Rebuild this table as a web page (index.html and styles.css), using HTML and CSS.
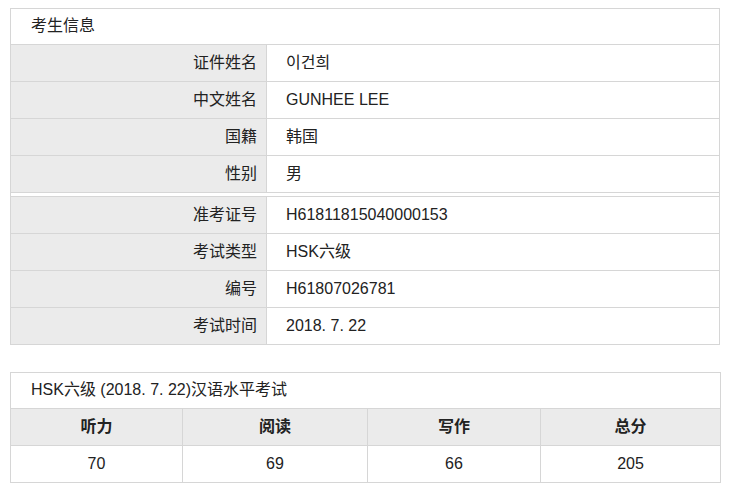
FILE: index.html
```html
<!DOCTYPE html>
<html lang="zh-CN">

<head>
    <meta charset="UTF-8">
    <meta name="viewport" content="width=device-width, initial-scale=1.0">
    <title>考生信息</title>
    <link rel="stylesheet" href="styles.css">
</head>

<body>
    <!-- 考生信息 -->
    <table class="box info">
        <colgroup>
            <col class="col-label">
            <col>
        </colgroup>
        <tr class="title">
            <td colspan="2">考生信息</td>
        </tr>
        <tr><td class="label">证件姓名</td><td class="value">이건희</td></tr>
        <tr><td class="label">中文姓名</td><td class="value">GUNHEE LEE</td></tr>
        <tr><td class="label">国籍</td><td class="value">韩国</td></tr>
        <tr><td class="label">性别</td><td class="value">男</td></tr>
        <tr class="sep"><td colspan="2"></td></tr>
        <tr><td class="label">准考证号</td><td class="value">H61811815040000153</td></tr>
        <tr><td class="label">考试类型</td><td class="value">HSK六级</td></tr>
        <tr><td class="label">编号</td><td class="value">H61807026781</td></tr>
        <tr><td class="label">考试时间</td><td class="value">2018. 7. 22</td></tr>
    </table>

    <!-- 成绩 -->
    <table class="box score">
        <colgroup>
            <col class="c1">
            <col class="c2">
            <col class="c3">
            <col class="c4">
        </colgroup>
        <tr class="title">
            <td colspan="4">HSK六级 (2018. 7. 22)汉语水平考试</td>
        </tr>
        <tr class="head">
            <th>听力</th>
            <th>阅读</th>
            <th>写作</th>
            <th>总分</th>
        </tr>
        <tr class="nums">
            <td>70</td>
            <td>69</td>
            <td>66</td>
            <td>205</td>
        </tr>
    </table>
</body>
</html>
```

FILE: styles.css
```css
* {
    box-sizing: border-box;
}
body {
    margin: 0;
    padding: 8px 14px 0 10px;
    background: #fff;
    color: #222;
    font-family: "Liberation Sans", "Noto Sans CJK SC", sans-serif;
    font-size: 16px;
    line-height: 20px;
}
.box {
    width: 710px;
    border-collapse: collapse;
    table-layout: fixed;
}
.box td,
.box th {
    border: 1px solid #d6d6d6;
    padding: 0 0 1px 0;
    height: 37px;
    vertical-align: middle;
}
.title td {
    height: 36px;
    padding-left: 20px;
}
.col-label {
    width: 256px;
}
.info .label {
    background: #ebebeb;
    text-align: right;
    padding-right: 9px;
}
.info .value {
    padding-left: 19px;
}
.info .sep td {
    height: 4px;
    padding: 0;
    border-top: 1px solid #d6d6d6;
    border-bottom: 1px solid #d6d6d6;
}
.score {
    margin-top: 27px;
}
.score .head th {
    background: #ebebeb;
    font-weight: bold;
    text-align: center;
}
.score .nums td {
    text-align: center;
}
.c1 { width: 172px; }
.c2 { width: 185px; }
.c3 { width: 173px; }
.c4 { width: 180px; }
```
